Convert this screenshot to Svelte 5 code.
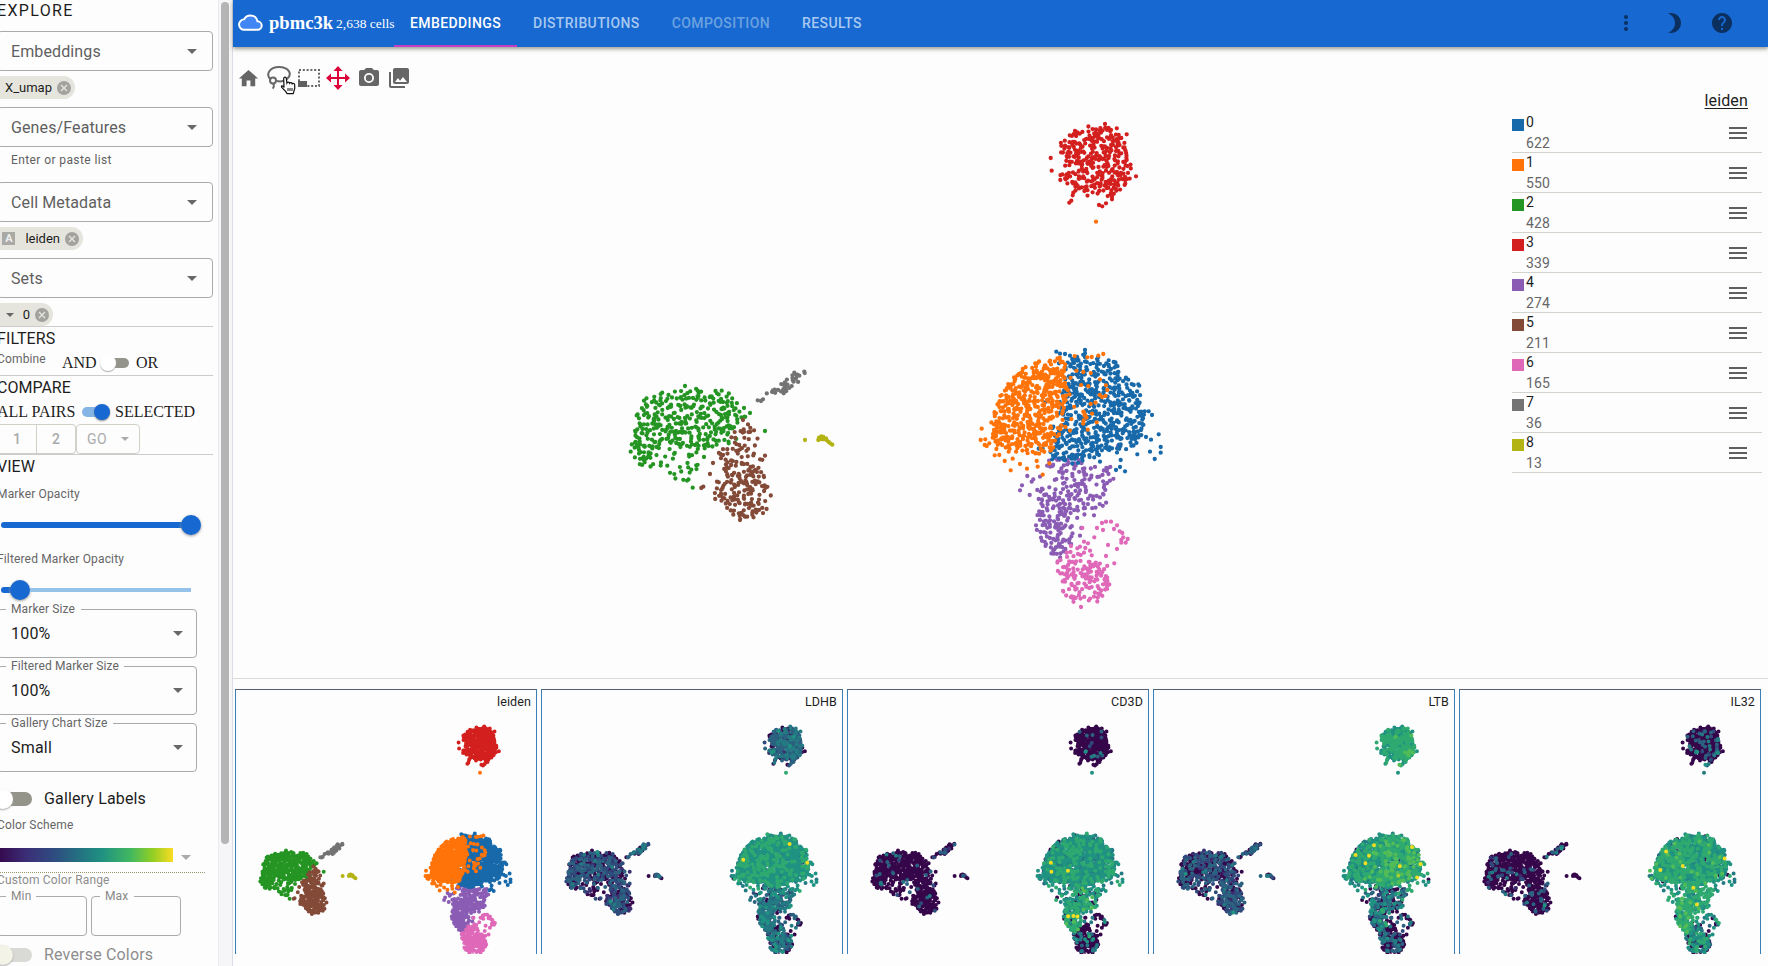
<script>
  let seed = 7919;
  function rand() {
    seed = (seed * 1664525 + 1013904223) % 4294967296;
    return seed / 4294967296;
  }
  function inside(x, y, poly) {
    let hit = false;
    for (let i = 0, j = poly.length - 1; i < poly.length; j = i++) {
      const [xi, yi] = poly[i];
      const [xj, yj] = poly[j];
      if (yi > y !== yj > y && x < ((xj - xi) * (y - yi)) / (yj - yi) + xi) hit = !hit;
    }
    return hit;
  }
  const palette = ['#1769aa', '#ff7308', '#249522', '#d3201f', '#8a5cb4', '#844a38', '#df69b8', '#737373', '#b3b414'];
  const counts = [622, 550, 428, 339, 274, 211, 165, 36, 13];
  const cells = [];

  // Outlines use a local grid of a third of a pixel with its own origin.
  function fill(cluster, n, ox, oy, poly) {
    const xs = poly.map((p) => p[0]);
    const ys = poly.map((p) => p[1]);
    const x0 = Math.min(...xs), x1 = Math.max(...xs), y0 = Math.min(...ys), y1 = Math.max(...ys);
    const own = [];
    let gap = 5;
    let tries = 0;
    while (own.length < n) {
      if (++tries % 1500 === 0) gap *= 0.93;
      const x = x0 + rand() * (x1 - x0);
      const y = y0 + rand() * (y1 - y0);
      if (!inside(x, y, poly)) continue;
      if (own.some((q) => (q[0] - x) ** 2 + (q[1] - y) ** 2 < gap * gap)) continue;
      own.push([x, y]);
      const jx = (rand() + rand() - 1) * 11;
      const jy = (rand() + rand() - 1) * 11;
      cells.push({ c: cluster, x: ox + (x + jx) / 3, y: oy + (y + jy) / 3 });
    }
  }
  function place(cluster, ox, oy, pts) {
    for (const [x, y] of pts) cells.push({ c: cluster, x: ox + x / 3, y: oy + y / 3 });
  }

  fill(2, 345, 600, 340, [[130,182],[195,156],[250,142],[300,150],[365,155],[400,175],[430,205],[440,235],[410,258],[400,318],[340,325],[240,330],[190,325],[150,358],[120,370],[98,355],[95,330],[104,250],[114,215]]);
  fill(2, 34, 600, 340, [[140,345],[320,332],[316,352],[295,410],[278,436],[240,428],[185,385],[150,383],[110,372]]);
  place(2, 600, 340, [[255,138],[132,182],[365,152],[495,273],[450,219],[432,204],[278,443],[92,335]]);
  fill(5, 72, 600, 340, [[425,243],[462,260],[473,290],[480,340],[492,350],[487,400],[420,410],[380,410],[370,380],[342,362],[347,332],[390,322],[400,272]]);
  fill(5, 122, 600, 340, [[380,402],[490,400],[508,445],[503,490],[485,526],[455,538],[418,538],[372,502],[340,468],[354,430]]);
  place(5, 600, 340, [[429,240],[304,444],[310,440],[330,402],[351,425],[339,369],[495,347],[420,540]]);
  fill(7, 27, 600, 340, [[502,160],[510,150],[540,152],[545,129],[568,116],[580,104],[590,108],[583,146],[550,156],[530,162]]);
  place(7, 600, 340, [[473,181],[483,183],[489,178],[613,95],[614,99],[598,107],[592,104],[551,160],[583,98]]);
  place(8, 600, 340, [[615,300],[655,300],[657,293],[664,289],[670,291],[674,297],[680,301],[686,306],[691,310],[697,314],[668,298],[660,298],[678,295]]);

  fill(4, 126, 960, 330, [[265,395],[300,378],[350,375],[380,410],[472,402],[462,440],[455,500],[445,522],[405,545],[350,562],[300,510],[250,515],[238,480],[265,450]]);
  fill(4, 122, 960, 330, [[230,505],[300,500],[352,540],[330,570],[337,610],[334,665],[292,690],[250,654],[238,600],[232,575]]);
  place(4, 960, 330, [[186,466],[180,481],[202,438],[220,448],[209,495],[232,480],[215,455],[248,478],[268,472],[236,507],[360,617],[364,594],[285,335],[474,348],[402,556],[228,586],[240,440]]);
  fill(6, 134, 960, 330, [[290,692],[330,662],[345,685],[385,690],[440,705],[448,760],[435,795],[400,818],[355,824],[310,790],[300,740]]);
  place(6, 960, 330, [[367,594],[411,594],[426,579],[438,575],[453,575],[471,586],[429,600],[462,597],[479,604],[487,609],[490,622],[484,630],[503,627],[497,638],[484,638],[444,645],[471,657],[438,678],[463,700],[403,622],[372,635],[390,662],[360,650],[354,672],[376,654],[333,648],[362,675],[384,640],[372,668],[352,655],[395,676]]);

  fill(0, 560, 960, 330, [[318,100],[345,80],[375,72],[430,90],[465,99],[490,142],[535,165],[543,230],[570,255],[548,300],[528,342],[480,376],[460,362],[400,388],[350,400],[320,395],[270,390],[282,330],[292,240],[308,190],[305,130]]);
  place(0, 960, 330, [[289,65],[300,71],[315,72],[330,77],[375,60],[375,70],[461,96],[446,105],[535,163],[576,255],[558,321],[573,329],[596,313],[602,351],[602,368],[584,387],[570,365],[532,373],[495,424],[480,411],[468,420],[255,217],[236,356],[248,356],[297,100],[280,290],[420,395],[482,390]]);
  fill(1, 490, 960, 330, [[190,107],[260,88],[295,75],[322,95],[306,130],[320,175],[306,250],[292,340],[265,372],[215,375],[150,358],[102,348],[90,305],[100,265],[108,215],[126,182],[160,138]]);
  fill(1, 30, 960, 330, [[300,80],[380,70],[430,130],[440,190],[390,260],[380,300],[330,330],[300,360]]);
  place(1, 960, 330, [[65,296],[62,330],[76,328],[80,348],[74,345],[88,340],[104,376],[118,375],[146,365],[152,421],[134,393],[180,402],[230,393],[248,434],[233,410],[201,416],[158,386],[430,72],[415,77],[395,81],[382,82],[420,148],[438,166],[442,180],[419,195],[383,299],[410,277],[370,245],[268,400]]);
  place(1, 1020, 100, [[228,365]]);

  fill(3, 325, 1020, 100, [[114,135],[133,112],[165,90],[215,82],[255,78],[295,94],[318,135],[322,175],[334,195],[342,230],[310,248],[300,278],[262,292],[240,278],[190,282],[155,262],[122,240],[125,205],[140,178],[126,160]]);
  place(3, 1020, 100, [[92,174],[95,212],[320,103],[148,308],[154,302],[158,286],[160,278],[237,315],[247,319],[258,310],[276,292],[276,298],[255,72],[348,229]]);

  const dots = (list, fx, fy) => list.map((p) => `M${fx(p.x)} ${fy(p.y)}h0`).join('');
  const order = [2, 5, 7, 8, 4, 6, 0, 1, 3];
  const r1 = (v) => Math.round(v * 10) / 10;
  const mainLayers = order.map((c) => ({
    color: palette[c],
    d: dots(cells.filter((p) => p.c === c), (x) => r1(x - 234), (y) => r1(y - 92))
  }));

  const gx = (x) => r1(24.5 + (x - 631) * 0.472);
  const gy = (y) => r1(36 + (y - 123) * 0.4735);
  const ramp = ['#35064a', '#3b2f72', '#2f4b7c', '#2a6280', '#247a82', '#209281', '#2eaa70', '#52bd57', '#a5cf2d', '#f2df22'];
  // Per gene and cluster: share of cells with no expression, then mean and spread along the colour ramp.
  const profile = {
    LDHB: [[.02,4.9,.8],[.04,4.9,.9],[.42,2.2,1.1],[.34,3,1.1],[.16,3.6,1.1],[.4,1.9,1],[.36,3.3,1.1],[.35,3,1],[.5,3,1]],
    CD3D: [[.05,4.8,1],[.07,4.7,1],[.94,3,1],[.95,3.5,1.5],[.13,5.1,1.2],[.95,3,1],[.82,4,1],[.72,2,1],[.8,2,1]],
    LTB: [[.03,5.5,1.2],[.06,4.8,1.2],[.55,2.4,1.2],[.02,5.4,.8],[.4,3.5,1.6],[.32,2.2,.9],[.68,3.1,1],[.55,2.4,1],[.6,3,1]],
    IL32: [[.06,4.9,1.1],[.08,5.1,1.1],[.9,2.8,1],[.86,3.1,1.2],[.05,5.6,.8],[.9,2.7,1],[.34,4.6,1.3],[.65,3,1],[.9,2,1]]
  };
  function geneLayers(name) {
    const bins = ramp.map(() => []);
    for (const p of cells) {
      const [zero, mean, spread] = profile[name][p.c];
      let b = 0;
      if (rand() >= zero) {
        b = Math.round(mean + (rand() + rand() + rand() - 1.5) * spread * 1.35);
        if (rand() < 0.003) b = mean > 4.5 ? 9 : 5;
      }
      bins[Math.max(0, Math.min(9, b))].push(p);
    }
    return ramp.map((color, i) => ({ color, d: dots(bins[i], gx, gy) }));
  }
  const leidenLayers = order.map((c) => ({ color: palette[c], d: dots(cells.filter((p) => p.c === c), gx, gy) }));
  const gallery = [
    { name: 'leiden', layers: leidenLayers },
    ...['LDHB', 'CD3D', 'LTB', 'IL32'].map((name) => ({ name, layers: geneLayers(name) }))
  ];
  const sizes = [['Marker Size', '100%', 75], ['Filtered Marker Size', '100%', 118], ['Gallery Chart Size', 'Small', 107]];
</script>

{#snippet icon(d, size)}
  <svg width={size} height={size} viewBox="0 0 24 24" fill="currentColor"><path {d} /></svg>
{/snippet}
{#snippet clear()}
  <svg width="14" height="14" viewBox="2 2 20 20" fill="#a3a39d"><path d="M12 2a10 10 0 1 0 0 20 10 10 0 0 0 0-20zm5 13.600L15.600 17 12 13.400 8.400 17 7 15.600 10.600 12 7 8.400 8.400 7 12 10.600 15.600 7 17 8.400 13.400 12z" /></svg>
{/snippet}
{#snippet combo(label)}
  <div class="combo"><span>{label}</span><i class="arrow"></i></div>
{/snippet}

<div class="page">
  <aside>
    <div class="side">
      <div class="explore">EXPLORE</div>
      {@render combo('Embeddings')}
      <div class="chips"><div class="chip" style:width="75px"><span>X_umap</span>{@render clear()}</div></div>
      {@render combo('Genes/Features')}
      <div class="helper">Enter or paste list</div>
      {@render combo('Cell Metadata')}
      <div class="chips"><div class="chip" style:width="83px"><b class="abox">A</b><span>leiden</span>{@render clear()}</div></div>
      {@render combo('Sets')}
      <div class="chips last"><div class="chip" style:width="53px"><i class="arrow small"></i><span>0</span>{@render clear()}</div></div>
      <section class="filters">
        <h2>FILTERS</h2>
        <div class="combine"><span class="cap">Combine</span><span class="serif and">AND</span><span class="switch off"></span><span class="serif">OR</span></div>
      </section>
      <section class="compare">
        <h2>COMPARE</h2>
        <div class="pairs"><span class="serif">ALL PAIRS</span><span class="switch on"></span><span class="serif">SELECTED</span></div>
        <div class="buttons"><span class="b1">1</span><span class="b2">2</span><span class="b3">GO<i class="arrow"></i></span></div>
      </section>
      <section class="view">
        <h2>VIEW</h2>
        <div class="cap opa">Marker Opacity</div>
        <div class="slider"><i class="done" style:width="190px"></i><i class="knob"></i></div>
        <div class="cap opa2">Filtered Marker Opacity</div>
        <div class="slider second"><i class="done" style:width="19px"></i><i class="knob"></i><i class="rest"></i></div>
        {#each sizes as [label, value, w]}
          <div class="field"><span class="legend" style:width="{w}px">{label}</span><span>{value}</span><i class="arrow"></i></div>
        {/each}
        <div class="toggle"><span class="track"></span><span>Gallery Labels</span></div>
        <div class="cap scheme">Color Scheme</div>
        <div class="rampRow"><div class="ramp"></div><i class="arrow"></i></div>
        <div class="cap custom">Custom Color Range</div>
        <div class="minmax">
          <div class="mm min"><span class="legend">Min</span></div>
          <div class="mm max"><span class="legend">Max</span></div>
        </div>
        <div class="toggle dim"><span class="track"></span><span>Reverse Colors</span></div>
      </section>
    </div>
    <div class="scroll"><div class="thumb"></div></div>
  </aside>

  <div class="content">
    <header>
      <svg class="cloud" width="25" height="25" viewBox="0 0 24 24"><path d="M18.700 10.900C18.200 7.600 15.500 5.200 12 5.200c-2.700 0-5 1.500-6.200 3.800A5 5 0 0 0 6.200 19H18.700a4.050 4.050 0 0 0 0-8.100z" fill="#4285f4" stroke="#fff" stroke-width="1.900" stroke-linejoin="round" /></svg>
      <strong>pbmc3k</strong><span class="cells">2,638 cells</span>
      <nav><span class="active">EMBEDDINGS</span><span>DISTRIBUTIONS</span><span class="disabled">COMPOSITION</span><span>RESULTS</span></nav>
      <div class="actions">
        {@render icon('M12 8a2 2 0 1 0 0-4 2 2 0 0 0 0 4zm0 2a2 2 0 1 0 0 4 2 2 0 0 0 0-4zm0 6a2 2 0 1 0 0 4 2 2 0 0 0 0-4z', 24)}
        {@render icon('M9 2c-1.050 0-2.050.16-3 .46 4.060 1.270 7 5.060 7 9.540s-2.940 8.270-7 9.540c.95.3 1.950.46 3 .46 5.520 0 10-4.480 10-10S14.520 2 9 2z', 24)}
        {@render icon('M12 2C6.480 2 2 6.480 2 12s4.480 10 10 10 10-4.480 10-10S17.520 2 12 2zm1 17h-2v-2h2v2zm2.070-7.750-.9.920C13.450 12.900 13 13.500 13 15h-2v-.5c0-1.100.45-2.100 1.170-2.830l1.240-1.260c.37-.36.59-.86.59-1.410 0-1.100-.9-2-2-2s-2 .9-2 2H8c0-2.210 1.790-4 4-4s4 1.790 4 4c0 .88-.36 1.680-.93 2.250z', 24)}
      </div>
    </header>

    <div class="tools">
      {@render icon('M10 20v-6h4v6h5v-8h3L12 3 2 12h3v8z', 23)}
      <span class="lasso">
        <svg width="26" height="26" viewBox="0 0 26 26" fill="none" stroke="#686868" stroke-width="2"><path d="M5 14.500C-1 10 3.500 2 13 2s14 7 8 12c-3 2.400-7 2.700-10 2" /><circle cx="7" cy="15.500" r="3" /><path d="M7 18.500c1.500 2 1 4-.5 5" /></svg>
        <svg class="hand" width="17" height="19" viewBox="0 0 17 19"><path d="M4 11.500 3.700 2.600C3.600.7 6.100.5 6.300 2.300L6.900 7c.5-1.200 2.300-1.100 2.700.2.600-1.100 2.400-.8 2.600.6.8-.8 2.500-.3 2.500 1.300v3.500l-1.500 5H7.100l-1.300-2-4-4.200c-1.100-1.500.6-2.600 2.200.1z" fill="#fff" stroke="#111" stroke-width="1.200" /><path d="M8 12v3m2-3v3m2-3v3" stroke="#111" /></svg>
      </span>
      <svg class="marquee" width="24" height="20" viewBox="0 0 24 20"><path d="M2 2h20v16H2z" fill="none" stroke="#666" stroke-width="2" stroke-dasharray="2 1.800" /><path d="M1 13h9v6H1z" fill="#606060" /></svg>
      <svg class="pan" width="24" height="24" viewBox="0 0 24 24" fill="#dc0038"><path d="M12 0l4.500 5H13v6h6V7.500L24 12l-5 4.500V13h-6v6h3.500L12 24l-4.500-5H11v-6H5v3.500L0 12l5-4.500V11h6V5H7.500z" /></svg>
      {@render icon('M9 2 7.170 4H4c-1.100 0-2 .9-2 2v12c0 1.100.9 2 2 2h16c1.100 0 2-.9 2-2V6c0-1.100-.9-2-2-2h-3.170L15 2H9zm3 15a5 5 0 1 1 0-10 5 5 0 0 1 0 10zm0-1.800a3.200 3.200 0 1 0 0-6.400 3.200 3.200 0 0 0 0 6.400z', 24)}
      {@render icon('M22 16V4c0-1.100-.9-2-2-2H8c-1.100 0-2 .9-2 2v12c0 1.100.9 2 2 2h12c1.100 0 2-.9 2-2zm-11-4 2.030 2.710L16 11l4 5H8l3-4zM2 6v14c0 1.100.9 2 2 2h14v-2H4V6H2z', 24)}
    </div>

    <div class="plot">
      <svg class="scatter" width="1260" height="550" viewBox="0 0 1260 550">
        {#each mainLayers as layer}<path d={layer.d} stroke={layer.color} />{/each}
      </svg>
      <div class="legendCol">
        <div class="title"><span>leiden</span></div>
        {#each counts as n, i}
          <div class="row"><i class="swatch" style:background={palette[i]}></i><div class="num"><span>{i}</span><small>{n}</small></div>
            <i class="bars"></i></div>
        {/each}
      </div>
    </div>

    <div class="gallery">
      {#each gallery as g}
        <div class="card"><span>{g.name}</span>
          <svg width="302" height="264" viewBox="0 0 302 264">
            {#each g.layers as layer}<path d={layer.d} stroke={layer.color} />{/each}
          </svg>
        </div>
      {/each}
    </div>
  </div>
</div>

<style>
  :global(body) { overflow: hidden; background: #fdfdfe; }
  .page { display: flex; width: 1768px; height: 966px; overflow: hidden; background: #fdfdfe; color: #1d1d1d; font-family: Roboto, sans-serif; font-size: 16px; }
  .page :global(*) { box-sizing: border-box; }
  svg { display: block; flex: none; }
  i { display: block; font-style: normal; }
  aside { display: flex; width: 233px; flex: none; border-right: 1px solid #dcdce6; overflow: hidden; }
  .side { width: 216px; margin-left: -3px; flex: none; display: flex; flex-direction: column; }
  .scroll { width: 14px; margin-left: 5px; background: #f6f6f8; border-left: 1px solid #eaeaf0; padding: 2px 0 0 2px; }
  .thumb { width: 8px; height: 842px; border-radius: 4px; background: #b5b5b5; }
  .explore { height: 31px; line-height: 21px; letter-spacing: 1.350px; white-space: nowrap; flex: none; }
  .combo { height: 40px; border: 1px solid #aaa; border-radius: 4px; padding: 0 15px 0 13px; display: flex; align-items: center; justify-content: space-between; color: #5f5f5f; letter-spacing: .12px; flex: none; }
  .arrow { width: 0; height: 0; border: 5px solid transparent; border-top-color: #686868; border-bottom: 0; }
  .chips { height: 36px; padding-top: 5px; flex: none; }
  .chips.last { height: 28px; }
  .chip { height: 23px; margin-left: 3px; background: #e5e5dd; border-radius: 0 12px 12px 0; display: flex; align-items: center; justify-content: flex-end; padding-right: 4px; font-size: 13px; }
  .chip span { margin-right: 5px; }
  .abox { width: 13px; height: 13px; background: #a9a9a5; color: #eee; font-size: 11px; line-height: 13px; text-align: center; margin-right: 10px; }
  .small { border-width: 4px 4px 0; margin-right: 9px; }
  .helper { height: 35px; padding: 5px 14px; font-size: 12px; letter-spacing: .4px; line-height: 16px; color: #5f5f5f; flex: none; }
  section { flex: none; border-top: 1px solid #ccc; }
  h2 { font-size: 16px; font-weight: 400; margin: 0; line-height: 24px; height: 24px; }
  .filters { height: 49px; }
  .filters h2 { letter-spacing: .1px; }
  .cap { font-size: 12px; color: #666; letter-spacing: .15px; line-height: 16px; }
  .serif { font-family: "Liberation Serif", serif; font-size: 16px; line-height: 20px; }
  .combine { display: flex; height: 24px; align-items: center; }
  .combine .cap { width: 65px; padding-bottom: 9px; }
  .and { width: 38px; }
  .switch { position: relative; width: 29px; height: 10px; border-radius: 5px; }
  .switch::after { content: ''; position: absolute; width: 16px; height: 16px; border-radius: 50%; top: -3px; }
  .off { width: 26px; background: #94948b; margin-right: 7px; margin-left: 3px; }
  .off::after { left: -3px; background: #fff; box-shadow: 0 1px 1px #aaa; }
  .on { width: 28px; background: #84b5e5; margin: 0 5px 0 7px; }
  .on::after { right: 0; background: #1768d0; box-shadow: 0 1px 2px #888; }
  .compare { height: 79px; }
  .pairs { display: flex; height: 24px; align-items: center; white-space: nowrap; }
  .pairs .serif:first-child { width: 78px; }
  .buttons { height: 30px; display: flex; color: #aaa; font-size: 14px; font-weight: 500; }
  .buttons span { border: 1px solid #d1d1ca; display: flex; align-items: center; justify-content: center; }
  .b1 { width: 40px; }
  .b2 { width: 39px; border-left: 0 !important; border-radius: 0 4px 4px 0; }
  .b3 { width: 64px; border-radius: 4px; gap: 14px; font-weight: 400; letter-spacing: .3px; }
  .b3 .arrow { border-top-color: #aaa; border-width: 4px 4px 0; }
  .opa { margin-top: 7px; }
  .slider { height: 20px; margin: 13px 0 0 4px; display: flex; align-items: center; }
  .done { height: 6px; background: #1768d0; border-radius: 3px; }
  .knob { width: 20px; height: 20px; flex: none; margin-left: -10px; border-radius: 50%; background: #1768d0; box-shadow: 0 1px 3px #999; }
  .rest { height: 4px; width: 161px; background: #94c2e8; }
  .opa2 { margin-top: 16px; }
  .field { position: relative; height: 49px; width: 200px; margin-bottom: 8px; border: 1px solid #aaa; border-radius: 4px; padding: 0 13px; display: flex; align-items: center; justify-content: space-between; letter-spacing: .2px; }
  .second { margin-bottom: 9px; }
  .legend { position: absolute; left: 8px; top: -8px; height: 16px; padding-left: 5px; background: #fdfdfe; font-size: 12px; line-height: 14px; letter-spacing: .12px; color: #666; white-space: nowrap; }
  .toggle { display: flex; align-items: center; height: 37px; letter-spacing: .15px; }
  .track { position: relative; width: 34px; height: 14px; border-radius: 7px; background: #94948b; margin-right: 12px; flex: none; margin-left: 1px; }
  .track::after { content: ''; position: absolute; width: 20px; height: 20px; border-radius: 50%; top: -3px; left: -5px; background: #fff; box-shadow: 0 1px 2px #aaa; }
  .scheme { height: 31px; line-height: 17px; }
  .rampRow { display: flex; align-items: center; height: 25px; width: 208px; border-bottom: 1px dotted #96966a; padding-bottom: 11px; gap: 8px; }
  .ramp { width: 176px; height: 14px; background: linear-gradient(90deg, #35064a, #3b2f78 17%, #2f4b80 32%, #237282 47%, #209281 60%, #42b860 76%, #8fce25 88%, #f9dc21); }
  .rampRow .arrow { border-top-color: #aaa; margin-top: 5px; }
  .custom { height: 23px; color: #8d8d8d; line-height: 15px; }
  .minmax { display: flex; gap: 4px; height: 40px; }
  .mm { position: relative; width: 90px; height: 40px; border: 1px solid #aaa; border-radius: 4px; }
  .mm .legend { width: 30px; color: #888; }
  .max .legend { width: 34px; }
  .dim { color: #8d8d8d; letter-spacing: .18px; }
  .dim .track { background: #d9d9d5; }
  .dim .track::after { background: #f3f3e8; }

  .content { flex: 1; display: flex; flex-direction: column; min-width: 0; }
  header { height: 47px; flex: none; background: #1768d0; display: flex; align-items: center; color: #fff; padding: 0 34px 0 5px; box-shadow: 0 2px 4px rgba(60,60,40,.5); }
  .cloud { margin: -3px 6px 0 0; }
  strong, .cells { font-family: "Liberation Serif", serif; margin-top: -1px; }
  strong { font-size: 18.600px; width: 67px; }
  .cells { font-size: 13.500px; width: 58px; margin-top: 1px; white-space: nowrap; }
  nav { display: flex; height: 47px; font-size: 14px; font-weight: 500; letter-spacing: .4px; }
  nav span { padding: 0 16px; line-height: 47px; color: #a7c9f0; }
  nav .active { color: #fff; border-bottom: 2px solid #c13fc5; }
  nav .disabled { color: #6ba2e1; }
  .actions { display: flex; gap: 24px; margin: -1px 0 0 auto; color: #0b3060; }
  .tools { height: 45px; display: flex; align-items: center; color: #666; padding: 17px 0 0 3.500px; flex: none; gap: 6.200px; }
  .lasso { position: relative; width: 26px; }
  .marquee { margin-left: -1px; }
  .pan { margin: 0 .5px 0 -1px; }
  .hand { position: absolute; left: 14px; top: 11px; }
  .plot { height: 587px; flex: none; display: flex; border-bottom: 1px solid #dcdcd8; padding-left: 1px; }
  .scatter path { fill: none; stroke-width: 4.300; stroke-linecap: round; }
  .legendCol { width: 250px; margin-left: 18px; }
  .title { text-align: right; padding-right: 14px; height: 21px; line-height: 17px; }
  .title span { letter-spacing: .15px; text-decoration: underline; text-decoration-thickness: 1px; text-underline-offset: 2px; }
  .row { height: 40px; display: flex; border-bottom: 1px solid #d3d3ce; font-size: 14px; letter-spacing: .1px; }
  .swatch { width: 12px; height: 12px; margin: 6px 2px 0 0; }
  .num { display: flex; flex-direction: column; flex: 1; }
  .num span { line-height: 19px; }
  small { font-size: 14px; color: #666; line-height: 22px; }
  .bars { width: 18px; height: 12px; margin: 14px 15px 0 0; border: solid #5f5f5f; border-width: 2px 0; background: linear-gradient(#5f5f5f, #5f5f5f) 0 3px / 18px 2px no-repeat; }
  .gallery { display: flex; gap: 4px; padding: 10px 0 0 2px; }
  .card { position: relative; width: 302px; height: 265px; flex: none; border: 1px solid #397fb9; border-top-color: #525f72; border-bottom: 0; overflow: hidden; }
  .card > span { position: absolute; right: 5px; top: 3px; font-size: 12.500px; line-height: 18px; letter-spacing: .1px; }
  .card path { fill: none; stroke-width: 4; stroke-linecap: round; }
</style>
